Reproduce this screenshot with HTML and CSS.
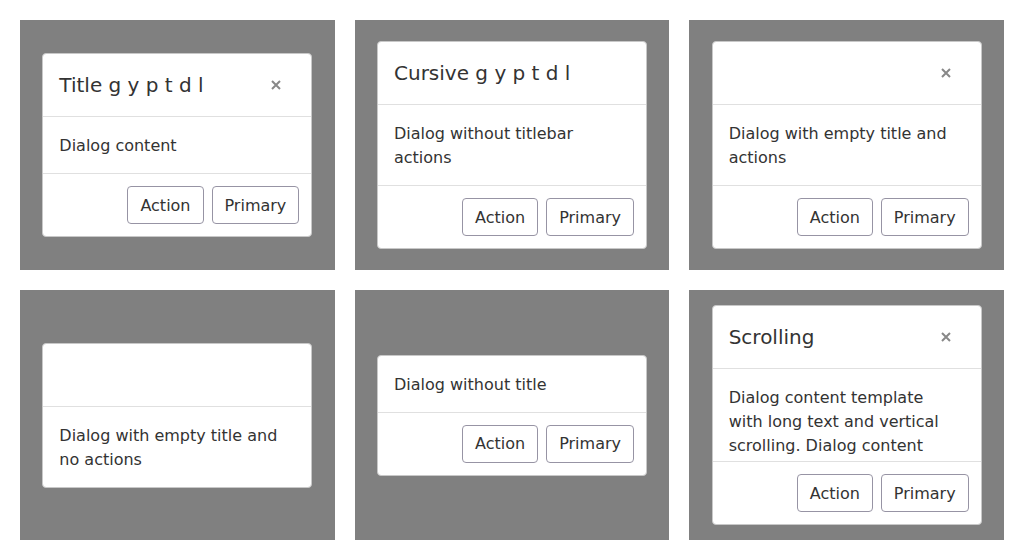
FILE: index.html
```html
<!DOCTYPE html>
<html>
<head>
<meta charset="utf-8">
<link rel="stylesheet" href="styles.css">
</head>
<body>
<div class="grid">
  <div class="panel">
    <div class="dialog">
      <div class="header">
        <div class="title">Title g y p t d l</div>
        <button class="close" aria-label="Close"><svg width="10" height="10" viewBox="0 0 10 10"><path d="M1 1L9 9M9 1L1 9" stroke="#888" stroke-width="2" fill="none"/></svg></button>
      </div>
      <div class="body">Dialog content</div>
      <div class="footer"><button class="btn">Action</button><button class="btn">Primary</button></div>
    </div>
  </div>
  <div class="panel">
    <div class="dialog">
      <div class="header">
        <div class="title">Cursive g y p t d l</div>
      </div>
      <div class="body">Dialog without titlebar actions</div>
      <div class="footer"><button class="btn">Action</button><button class="btn">Primary</button></div>
    </div>
  </div>
  <div class="panel">
    <div class="dialog">
      <div class="header">
        <div class="title"></div>
        <button class="close" aria-label="Close"><svg width="10" height="10" viewBox="0 0 10 10"><path d="M1 1L9 9M9 1L1 9" stroke="#888" stroke-width="2" fill="none"/></svg></button>
      </div>
      <div class="body">Dialog with empty title and actions</div>
      <div class="footer"><button class="btn">Action</button><button class="btn">Primary</button></div>
    </div>
  </div>
  <div class="panel">
    <div class="dialog">
      <div class="header">
        <div class="title"></div>
      </div>
      <div class="body">Dialog with empty title and no actions</div>
    </div>
  </div>
  <div class="panel">
    <div class="dialog">
      <div class="body">Dialog without title</div>
      <div class="footer"><button class="btn">Action</button><button class="btn">Primary</button></div>
    </div>
  </div>
  <div class="panel">
    <div class="dialog">
      <div class="header">
        <div class="title">Scrolling</div>
        <button class="close" aria-label="Close"><svg width="10" height="10" viewBox="0 0 10 10"><path d="M1 1L9 9M9 1L1 9" stroke="#888" stroke-width="2" fill="none"/></svg></button>
      </div>
      <div class="body scroll">Dialog content template with long text and vertical scrolling. Dialog content template with long text and vertical scrolling. Dialog content template with long text and vertical scrolling.</div>
      <div class="footer"><button class="btn">Action</button><button class="btn">Primary</button></div>
    </div>
  </div>
</div>
</body>
</html>
```

FILE: styles.css
```css
html, body {
  margin: 0;
  padding: 0;
  background: #fff;
}
body {
  font-family: "DejaVu Sans", sans-serif;
  color: #333;
}
.grid {
  display: grid;
  grid-template-columns: 1fr 1fr 1fr;
  grid-template-rows: 250px 250px;
  gap: 20px;
  padding: 20px;
}
.panel {
  background: #808080;
  display: flex;
  align-items: center;
  justify-content: center;
  min-width: 0;
}
.dialog {
  width: 270px;
  max-height: 220px;
  box-sizing: border-box;
  background: #fff;
  border: 1px solid #c8c8c8;
  border-radius: 4px;
  display: flex;
  flex-direction: column;
  overflow: hidden;
}
.header {
  display: flex;
  align-items: center;
  padding: 16px 12px 16px 16px;
  border-bottom: 1px solid #e0e0e0;
  flex: none;
}
.title {
  flex: 1;
  font-size: 20px;
  line-height: 30px;
  min-height: 30px;
  color: #333;
}
.close {
  width: 30px;
  height: 30px;
  margin-right: 8px;
  border: none;
  background: none;
  padding: 0;
  display: flex;
  align-items: center;
  justify-content: center;
}
.body {
  padding: 17px 16px 15px 16px;
  font-size: 16px;
  line-height: 24px;
  color: #333;
  flex: 0 1 auto;
}
.scroll {
  overflow-y: auto;
  scrollbar-width: none;
  min-height: 0;
  padding-right: 30px;
}
.body:not(:last-child) {
  border-bottom: 1px solid #e0e0e0;
}
.footer {
  display: flex;
  justify-content: flex-end;
  gap: 8px;
  padding: 12px;
  flex: none;
}
.btn {
  height: 38px;
  padding: 0 12px;
  font-family: "DejaVu Sans", sans-serif;
  font-size: 16px;
  color: #333;
  background: #fff;
  border: 1px solid #9794a4;
  border-radius: 4px;
}
```
